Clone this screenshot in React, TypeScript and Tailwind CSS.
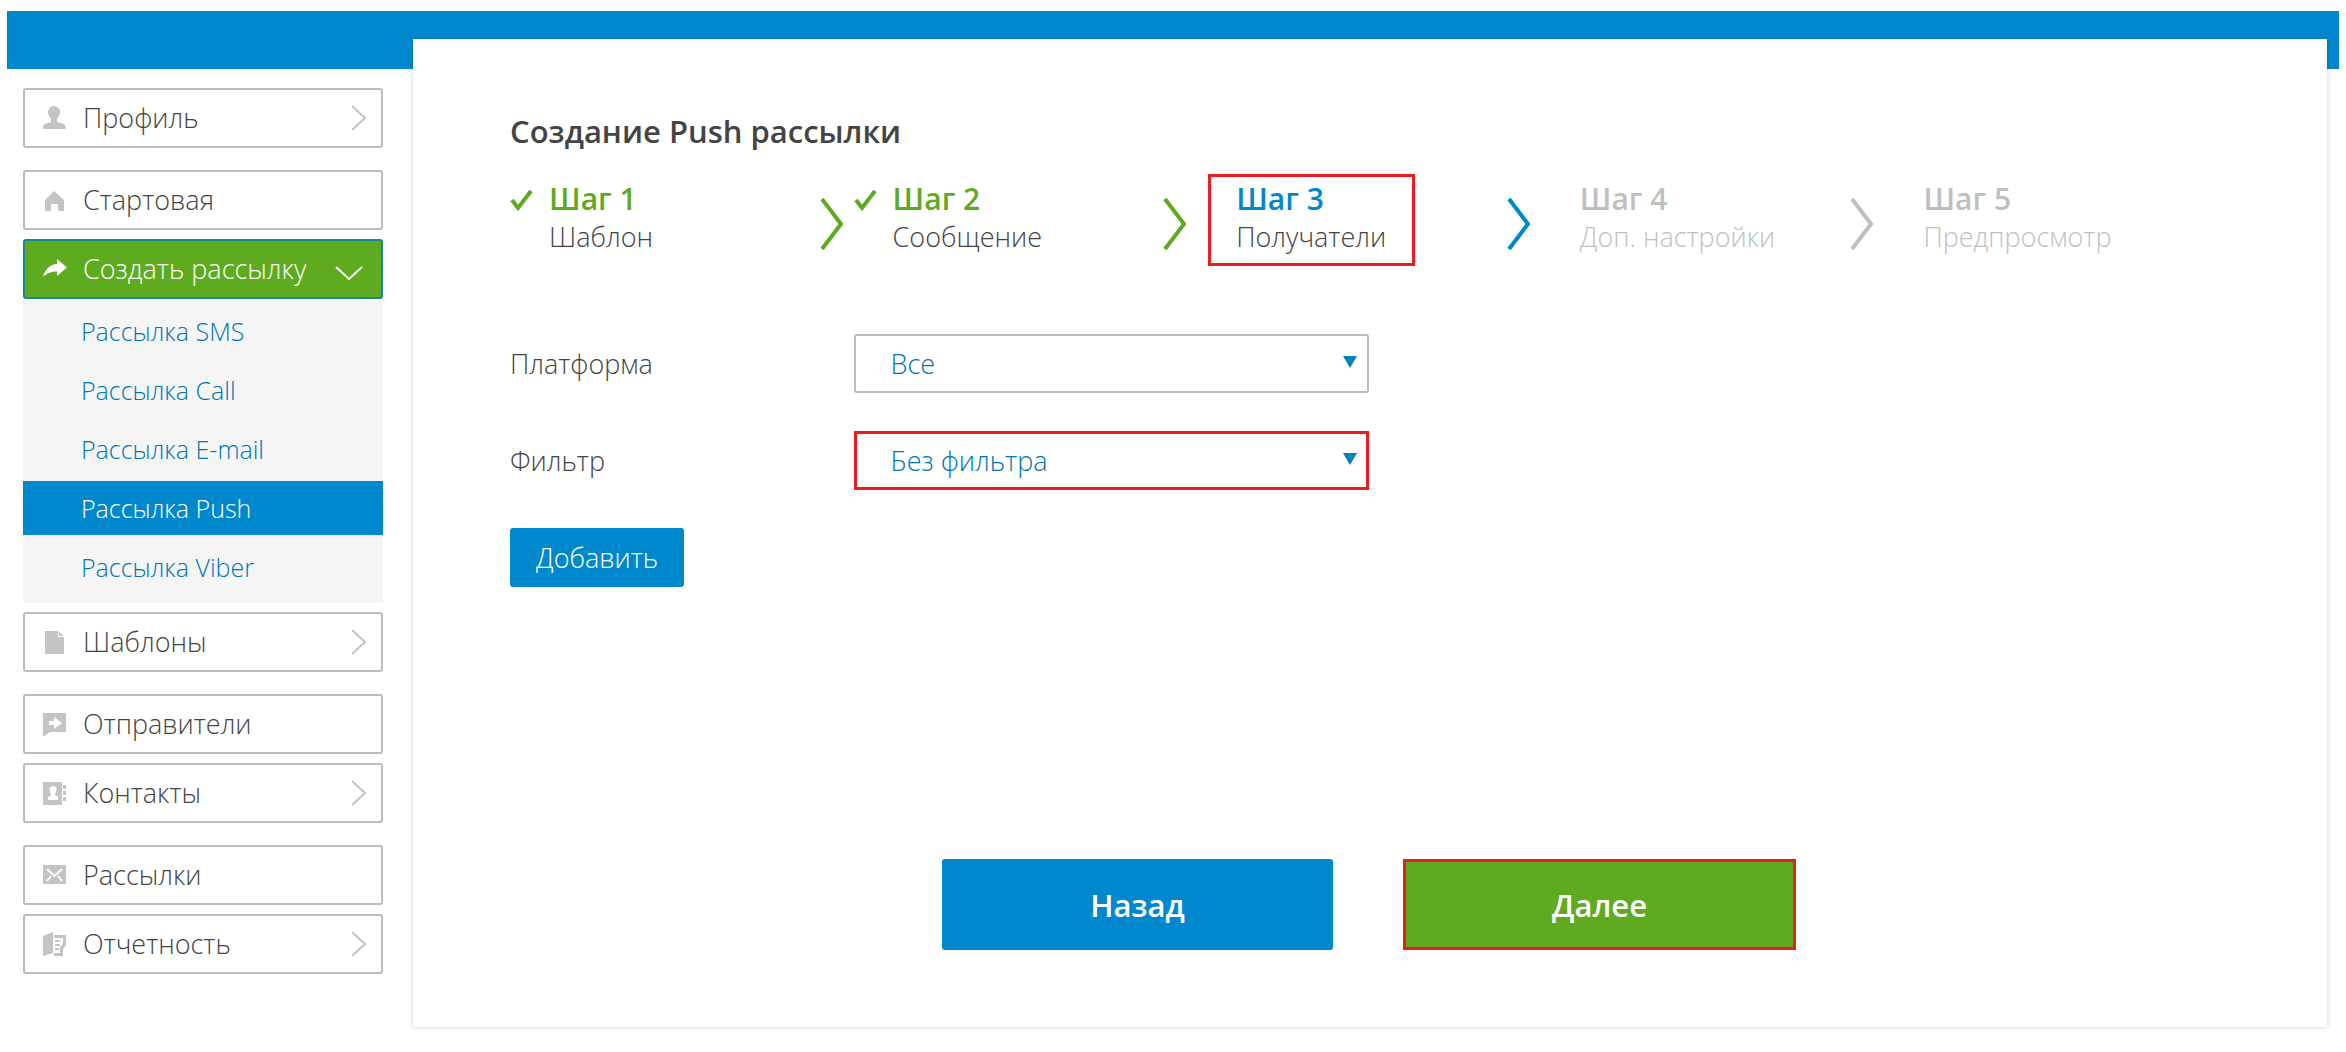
import { useState } from "react"
import type { ReactNode } from "react"
import clsx from "clsx"

type MenuItem = {
  label: string
  icon: ReactNode
  arrow?: boolean
}

const icons = {
  profile: (
    <svg className="size-6 shrink-0" viewBox="0 0 24 24" fill="currentColor">
      <path d="M11 0a6 6 0 0 1 6 6c0 3-1.500 5-3 7v3l5.500 1.500c2 .6 3 1.800 3 3.500v2H0v-2c0-1.700 1-2.900 3-3.500L8 16v-3C6.500 11 5 9 5 6a6 6 0 0 1 6-6Z" />
    </svg>
  ),
  home: (
    <svg className="size-6 shrink-0" viewBox="0 0 24 24" fill="currentColor">
      <path d="M11 3 21 12v11h-6v-7H8v7H2V12l9-9Z" />
    </svg>
  ),
  share: (
    <svg className="size-6 shrink-0" viewBox="0 0 24 24" fill="currentColor">
      <path d="M14 2 24 10.500 14 19v-4.500C8 14.500 4 16 0 20 2 12 7 7.500 14 7V2Z" />
    </svg>
  ),
  page: (
    <svg className="size-6 shrink-0" viewBox="0 0 24 24" fill="currentColor">
      <path d="M2 1h13v6h6v17H2V1Z" />
      <path d="M16 1.500 20.500 6H16V1.500Z" />
    </svg>
  ),
  senders: (
    <svg className="size-6 shrink-0" viewBox="0 0 24 24" fill="currentColor" fillRule="evenodd">
      <path d="M0 1h23v19H7l-7 5V1Zm11 4v4H6v4h5v4l8-6-8-6Z" />
    </svg>
  ),
  contacts: (
    <svg className="size-6 shrink-0" viewBox="0 0 24 24" fill="currentColor" fillRule="evenodd">
      <path d="M0 1h19v23H0V1Zm10 4a3.500 3.500 0 0 0-3.500 3.500C6.500 10.500 8 12 8 14l-3 2v3h10v-3l-3-2c0-2 1.500-3.500 1.500-5.500A3.500 3.500 0 0 0 10 5Z" />
      <path d="M20 4h3v4h-3zM20 10h3v4h-3zM20 16h3v4h-3z" />
    </svg>
  ),
  mail: (
    <svg className="size-6 shrink-0" viewBox="0 0 24 24">
      <path d="M0 2h23v19H0z" fill="currentColor" />
      <path d="m4 6 7.500 7L19 6M4 18l4-5M19 18l-4-5" fill="none" stroke="#fff" strokeWidth="2" />
    </svg>
  ),
  reports: (
    <svg className="size-6 shrink-0" viewBox="0 0 24 24" fill="currentColor">
      <path d="M0 4 10 0v21L0 24V4Z" />
      <path d="M11 3h12v10l-3 4v7h-9v-3h6v-6l3-3V6h-9V3Z" />
      <path d="M12 8h5v2h-5zM12 12h5v2h-5zM12 16h4v2h-4z" />
    </svg>
  ),
}

const submenu = ["Рассылка SMS", "Рассылка Call", "Рассылка E-mail", "Рассылка Push", "Рассылка Viber"]

const steps = [
  { title: "Шаг 1", text: "Шаблон", state: "done" },
  { title: "Шаг 2", text: "Сообщение", state: "done" },
  { title: "Шаг 3", text: "Получатели", state: "current" },
  { title: "Шаг 4", text: "Доп. настройки", state: "next" },
  { title: "Шаг 5", text: "Предпросмотр", state: "next" },
]

function MenuLink({ label, icon, arrow }: MenuItem) {
  return (
    <a
      href="#"
      className="flex h-[60px] items-center rounded-[3px] border-2 border-[#bcbcbc] bg-white pr-[14px] pl-[18px] text-[#444]"
    >
      <span className="text-[#c4c4c4]">{icon}</span>
      <span className="ml-4 flex-1 text-[27px] leading-9 font-light">{label}</span>
      {arrow && (
        <svg className="h-7 w-4 text-[#c4c4c4]" viewBox="0 0 16 28" fill="none" stroke="currentColor" strokeWidth="2">
          <path d="m1 2 13 12L1 26" />
        </svg>
      )}
    </a>
  )
}

function Sidebar() {
  const [active, setActive] = useState("Рассылка Push")

  return (
    <nav className="flex w-[360px] shrink-0 flex-col gap-[22px] pt-[49px]">
      <MenuLink label="Профиль" icon={icons.profile} arrow />
      <div className="flex flex-col gap-[9px]">
        <MenuLink label="Стартовая" icon={icons.home} />
        <div>
          <button
            type="button"
            className="flex h-[60px] w-full items-center rounded-[3px] border-2 border-[#16869a] bg-[#5eab1f] pr-[18px] pl-[18px] text-left text-white"
          >
            {icons.share}
            <span className="ml-4 flex-1 text-[27px] leading-9 font-light">Создать рассылку</span>
            <svg className="mt-2 h-4 w-7" viewBox="0 0 28 16" fill="none" stroke="currentColor" strokeWidth="2">
              <path d="m1 2 13 12L27 2" />
            </svg>
          </button>
          <ul className="flex flex-col gap-[5px] bg-[#f5f5f5] pt-[5px] pb-[9px]">
            {submenu.map((item) => (
              <li key={item}>
                <a
                  href="#"
                  onClick={() => setActive(item)}
                  className={clsx(
                    "block pl-[58px] text-[25px] leading-[54px] font-light",
                    item === active ? "bg-[#0088cf] text-white" : "text-[#0075b8]"
                  )}
                >
                  {item}
                </a>
              </li>
            ))}
          </ul>
        </div>
        <MenuLink label="Шаблоны" icon={icons.page} arrow />
      </div>
      <div className="flex flex-col gap-[9px]">
        <MenuLink label="Отправители" icon={icons.senders} />
        <MenuLink label="Контакты" icon={icons.contacts} arrow />
      </div>
      <div className="flex flex-col gap-[9px]">
        <MenuLink label="Рассылки" icon={icons.mail} />
        <MenuLink label="Отчетность" icon={icons.reports} arrow />
      </div>
    </nav>
  )
}

function Steps() {
  return (
    <ol className="mt-7 grid grid-cols-5">
      {steps.map((step, i) => (
        <li key={step.title} className="relative flex pr-[10px]">
          <span className="w-[39px] shrink-0 pt-[9px]">
            {step.state === "done" && (
              <svg className="h-6 w-6 text-[#5eab1f]" viewBox="0 0 24 24" fill="none" stroke="currentColor" strokeWidth="4">
                <path d="m2 12 6 8L21 3" />
              </svg>
            )}
          </span>
          <div className="flex-1 whitespace-nowrap">
            <p
              className={clsx(
                "text-[30px] leading-10 font-semibold",
                step.state === "done" && "text-[#5eab1f]",
                step.state === "current" && "text-[#0088cf]",
                step.state === "next" && "text-[#bfbfbf]"
              )}
            >
              {step.title}
            </p>
            <p
              className={clsx(
                "text-[27px] leading-9 font-light",
                step.state === "next" ? "text-[#bfbfbf]" : "text-[#444]"
              )}
            >
              {step.text}
            </p>
          </div>
          {i < steps.length - 1 && (
            <svg
              className={clsx(
                "mt-[18px] h-[54px] w-6 shrink-0",
                step.state === "done" && "text-[#5eab1f]",
                step.state === "current" && "text-[#0088cf]",
                step.state === "next" && "text-[#bfbfbf]"
              )}
              viewBox="0 0 24 54"
              fill="none"
              stroke="currentColor"
              strokeWidth="4"
            >
              <path d="m2 2 19 25L2 52" />
            </svg>
          )}
          {step.state === "current" && (
            <span className="absolute -top-[5px] left-[11px] h-[92px] w-[207px] border-[3px] border-[#ed1c24]" />
          )}
        </li>
      ))}
    </ol>
  )
}

type FieldProps = {
  id: string
  label: string
  value: string
  marked?: boolean
}

function SelectField({ id, label, value, marked }: FieldProps) {
  return (
    <div className="grid grid-cols-10 items-center">
      <label htmlFor={id} className="col-span-2 text-[27px] leading-9 font-light text-[#444]">
        {label}
      </label>
      <div className="relative col-span-3">
        <select
          id={id}
          className={clsx(
            "block h-[59px] w-full appearance-none bg-white text-[27px] leading-9 font-light text-[#0075b8]",
            marked ? "border-[3px] border-[#ed1c24] px-[34px]" : "rounded-[3px] border-2 border-[#bcbcbc] px-[35px]"
          )}
        >
          <option>{value}</option>
        </select>
        <svg
          className="pointer-events-none absolute top-[22px] right-3 h-3 w-[14px] text-[#0082bd]"
          viewBox="0 0 14 12"
          fill="currentColor"
        >
          <path d="M0 0h14L7 12z" />
        </svg>
      </div>
    </div>
  )
}

export default function App() {
  return (
    <div className="min-h-screen bg-white px-[7px] pt-[11px] pb-6 font-['Open_Sans',sans-serif]">
      <header className="h-[58px] bg-[#0088cf]" />
      <div className="-mt-[30px] flex gap-[30px] pr-[12px] pl-4">
        <Sidebar />
        <main className="relative flex-1 bg-white pt-[72px] pr-[99px] pb-[77px] pl-[97px] shadow-[0_0_5px_rgba(0,0,0,0.2)]">
          <h1 className="text-[31px] leading-10 font-semibold text-[#444]">Создание Push рассылки</h1>
          <Steps />
          <form className="mt-[79px]" onSubmit={(e) => e.preventDefault()}>
            <div className="flex flex-col gap-[38px]">
              <SelectField id="platform" label="Платформа" value="Все" />
              <SelectField id="filter" label="Фильтр" value="Без фильтра" marked />
            </div>
            <button
              type="button"
              className="mt-[38px] h-[59px] rounded-[3px] bg-[#0088cf] px-[26px] text-[27px] leading-9 font-light text-white"
            >
              Добавить
            </button>
            <div className="mt-[272px] flex justify-center gap-[70px] text-[31px] leading-10 font-semibold text-white">
              <button type="button" className="h-[91px] w-[391px] rounded-[3px] bg-[#0088cf]">
                Назад
              </button>
              <button type="submit" className="h-[91px] w-[393px] border-[3px] border-[#ed1c24] bg-[#5eab1f]">
                Далее
              </button>
            </div>
          </form>
        </main>
      </div>
    </div>
  )
}
